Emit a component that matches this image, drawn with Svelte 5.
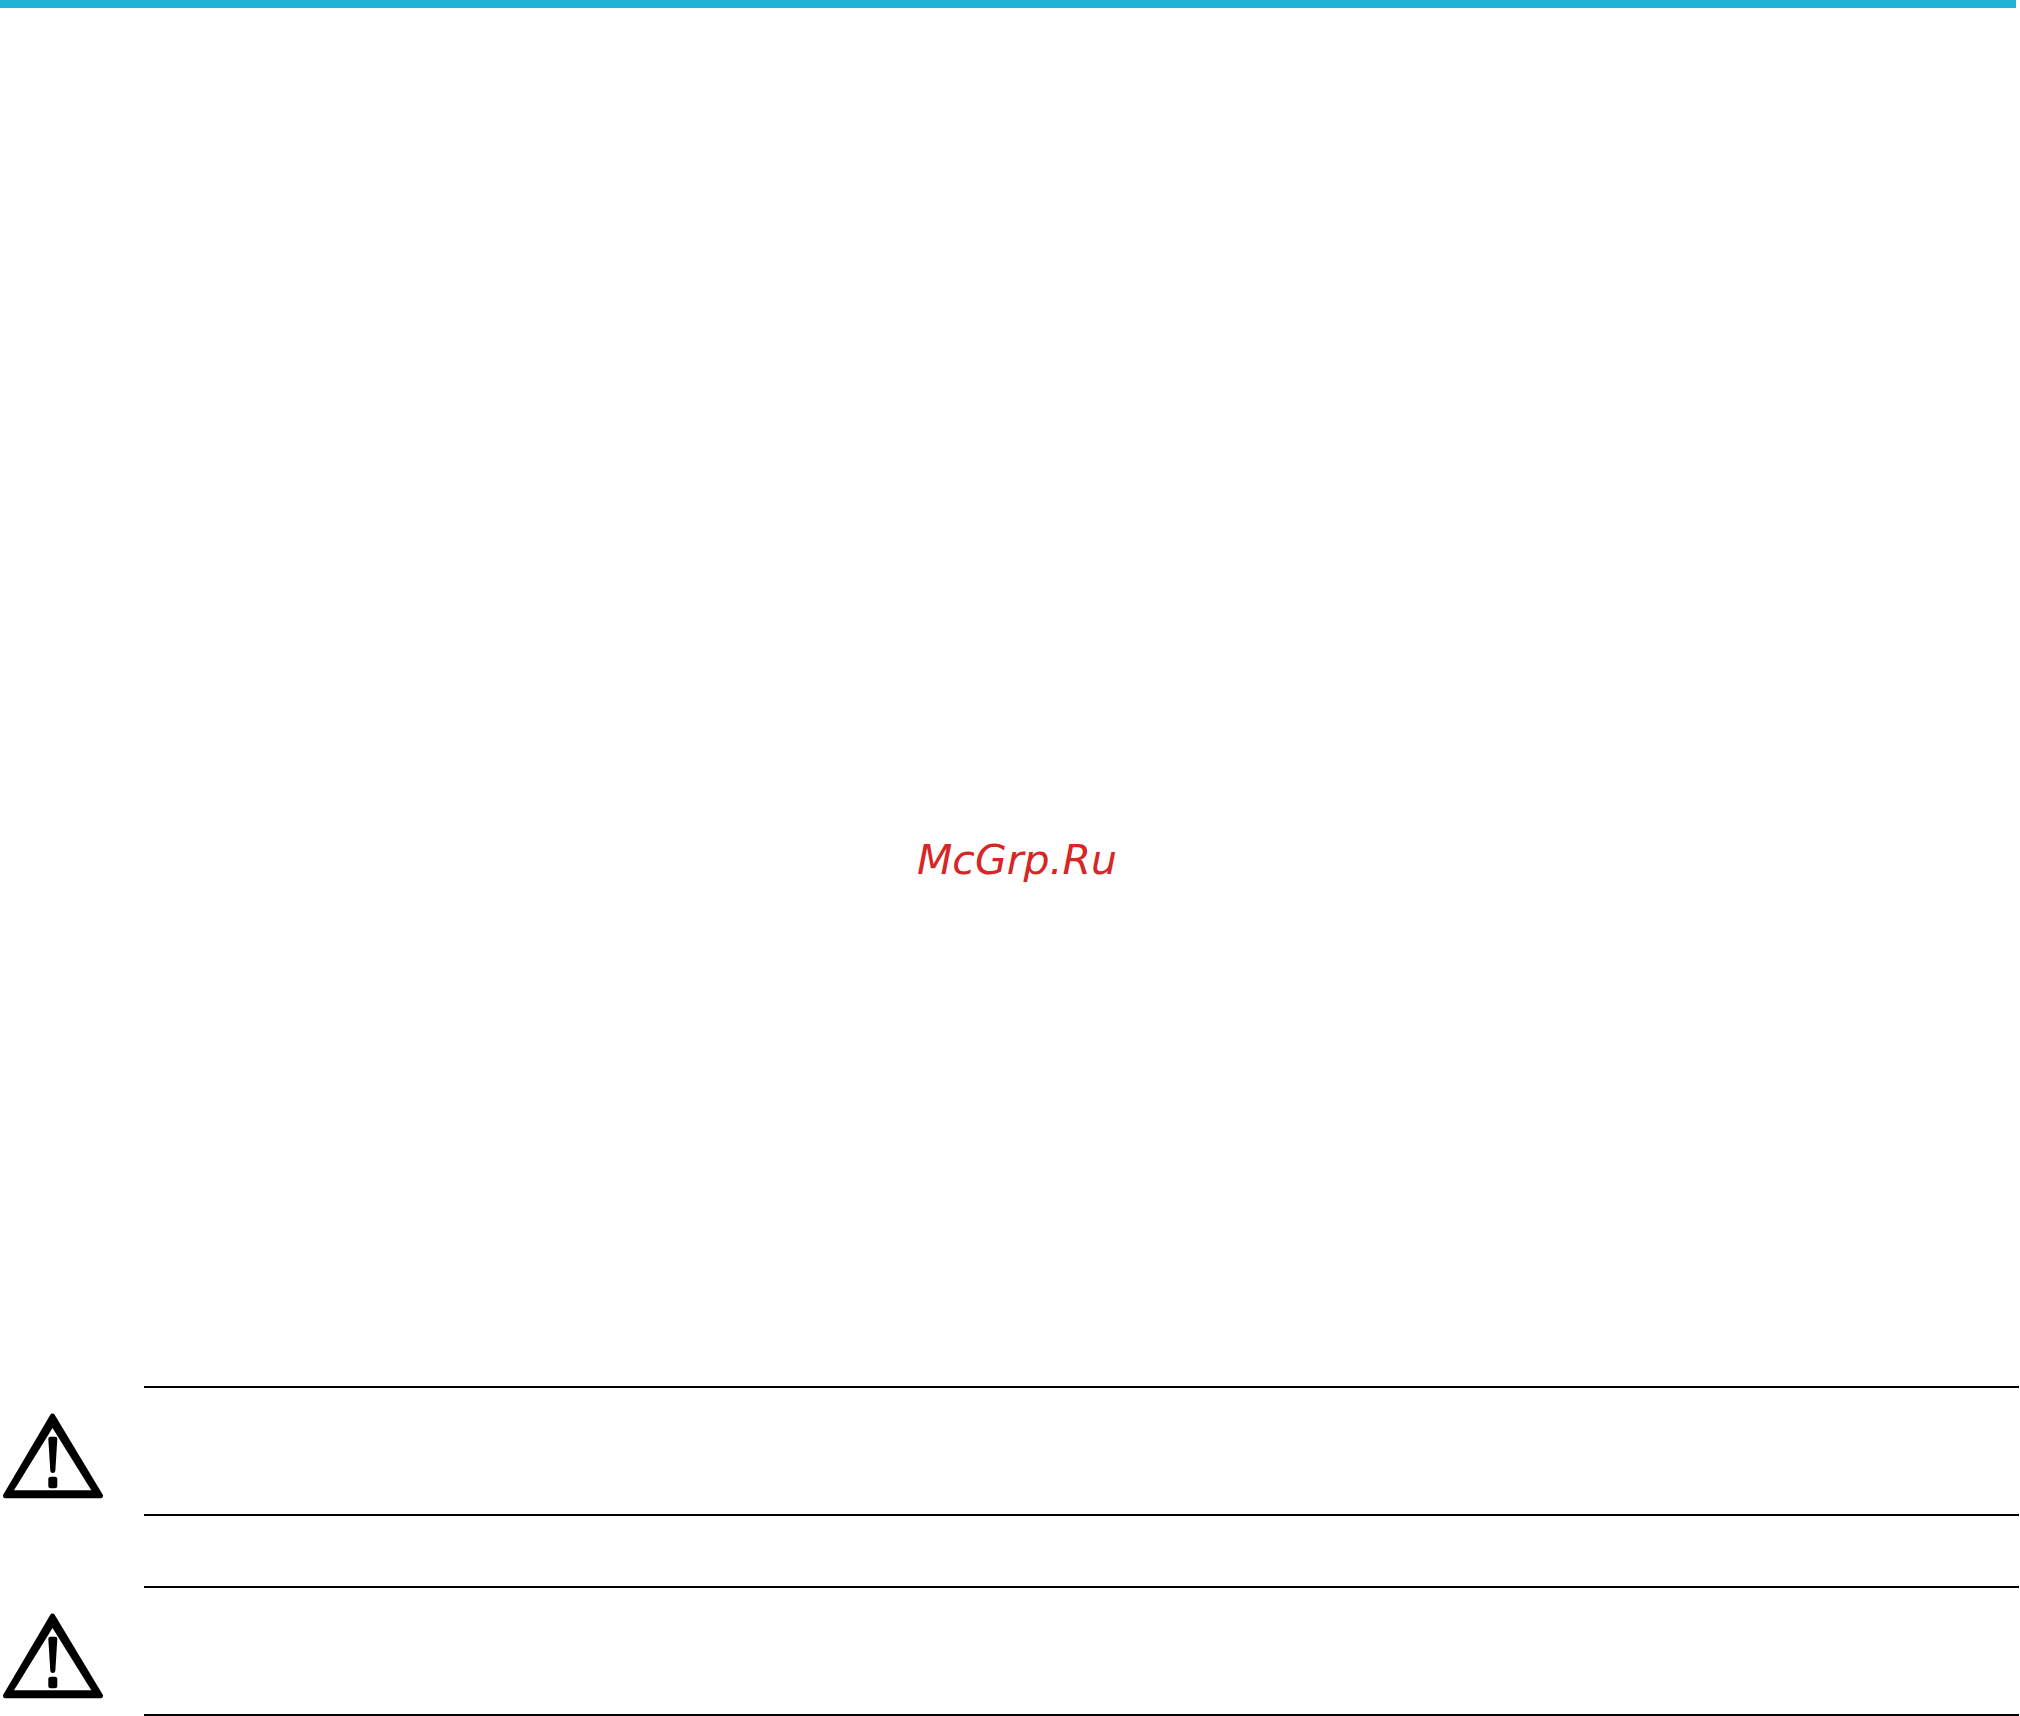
<script>
	const notices = [1, 2];
</script>

<div class="page">
	<div class="top-bar"></div>
	<div class="watermark">McGrp.Ru</div>
	<div class="notices">
		{#each notices as n (n)}
			<section class="notice">
				<div class="notice-icon">
					<svg width="106" height="88" viewBox="0 0 106 88" aria-hidden="true">
						<path d="M52.5 3 L100.5 82.8 L5.5 82.8 Z" fill="#000" stroke="#000" stroke-width="5" stroke-linejoin="round" />
						<path d="M52.5 15 L91.3 77.3 L14 77.3 Z" fill="#fff" />
						<path d="M48.3 26 Q48.3 23.7 50.3 23.7 L55.3 23.7 Q57.3 23.7 57.3 26 L55.3 58 Q55 60 52.8 60 Q50.6 60 50.3 58 Z" fill="#000" />
						<rect x="48.3" y="63.7" width="9" height="11.6" rx="2.5" fill="#000" />
					</svg>
				</div>
				<div class="notice-body"></div>
			</section>
		{/each}
	</div>
</div>

<style>
:global(body) {
	background: #fff;
}
.page {
	width: 2020px;
	height: 1716px;
	display: flex;
	flex-direction: column;
	overflow: hidden;
}
.top-bar {
	width: 2016px;
	height: 8px;
	background: #1fb3d6;
}
.watermark {
	margin-top: 830px;
	margin-left: 917px;
	font-family: "DejaVu Sans", sans-serif;
	font-style: italic;
	font-size: 41px;
	line-height: 44px;
	color: #d62626;
}
.notices {
	margin-top: auto;
	display: flex;
	flex-direction: column;
	gap: 70px;
}
.notice {
	display: flex;
	height: 130px;
}
.notice-icon {
	box-sizing: border-box;
	width: 144px;
	padding: 27px 0 0 0;
	flex: none;
}
.notice-icon svg {
	display: block;
}
.notice-body {
	flex: none;
	box-sizing: border-box;
	width: 1875px;
	border-top: 2px solid #000;
	border-bottom: 2px solid #000;
}
</style>
